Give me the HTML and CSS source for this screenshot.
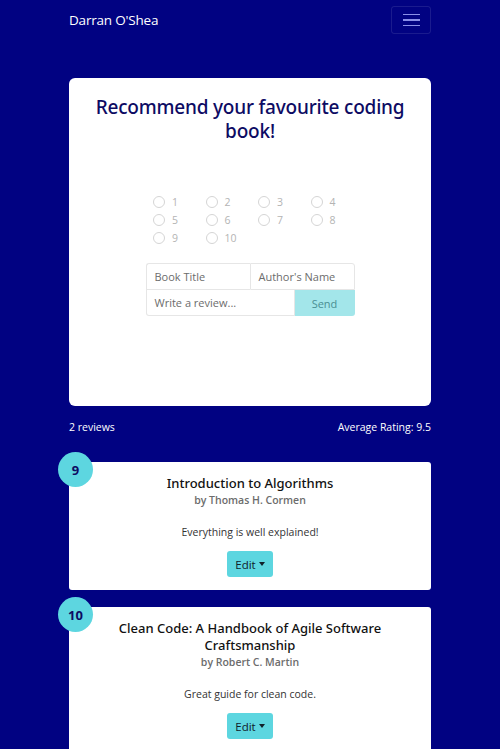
FILE: index.html
```html
<!DOCTYPE html>
<html>
<head>
<meta charset="utf-8">
<link rel="stylesheet" href="styles.css">
</head>
<body>
<nav class="navbar">
  <div class="brand">Darran O'Shea</div>
  <button class="toggler" aria-label="menu">
    <span class="bar"></span><span class="bar"></span><span class="bar"></span>
  </button>
</nav>
<main class="container">
  <section class="form-card">
    <h1 class="form-title">Recommend your favourite coding book!</h1>
    <div class="ratings">
      <label class="rating"><span class="radio"></span>1</label>
      <label class="rating"><span class="radio"></span>2</label>
      <label class="rating"><span class="radio"></span>3</label>
      <label class="rating"><span class="radio"></span>4</label>
      <label class="rating"><span class="radio"></span>5</label>
      <label class="rating"><span class="radio"></span>6</label>
      <label class="rating"><span class="radio"></span>7</label>
      <label class="rating"><span class="radio"></span>8</label>
      <label class="rating"><span class="radio"></span>9</label>
      <label class="rating"><span class="radio"></span>10</label>
    </div>
    <div class="input-group">
      <div class="row">
        <div class="field">Book Title</div>
        <div class="field">Author's Name</div>
      </div>
      <div class="row">
        <div class="field review-field">Write a review...</div>
        <div class="send">Send</div>
      </div>
    </div>
  </section>
  <div class="summary">
    <span>2 reviews</span>
    <span>Average Rating: 9.5</span>
  </div>
  <article class="review-card">
    <div class="badge">9</div>
    <h2 class="book-title">Introduction to Algorithms</h2>
    <div class="author">by Thomas H. Cormen</div>
    <p class="review-text">Everything is well explained!</p>
    <div class="actions"><button class="edit">Edit<span class="caret"></span></button></div>
  </article>
  <article class="review-card">
    <div class="badge">10</div>
    <h2 class="book-title">Clean Code: A Handbook of Agile Software Craftsmanship</h2>
    <div class="author">by Robert C. Martin</div>
    <p class="review-text">Great guide for clean code.</p>
    <div class="actions"><button class="edit">Edit<span class="caret"></span></button></div>
  </article>
</main>
</body>
</html>
```
FILE: styles.css
```css
html, body {
  margin: 0;
  padding: 0;
}
body {
  background: #010282;
  font-family: "Open Sans", "Noto Sans", sans-serif;
  color: #212529;
  height: 749px;
  overflow: hidden;
}
.navbar {
  display: flex;
  justify-content: space-between;
  align-items: center;
  padding: 6px 69px 0 69px;
  height: 28px;
}
.brand {
  color: #ffffff;
  font-size: 13.5px;
  letter-spacing: -0.2px;
}
.toggler {
  width: 40px;
  height: 28px;
  background: transparent;
  border: 1px solid rgba(255,255,255,0.1);
  border-radius: 3px;
  display: flex;
  flex-direction: column;
  justify-content: center;
  align-items: center;
  gap: 4px;
  padding: 0;
}
.toggler .bar {
  display: block;
  width: 17px;
  height: 1.5px;
  background: #8a8fe8;
}
.container {
  margin: 44px 69px 0 69px;
}
.form-card {
  background: #ffffff;
  border-radius: 6px;
  height: 328px;
  padding-top: 17px;
  box-sizing: border-box;
}
.form-title {
  margin: 0 auto;
  width: 320px;
  text-align: center;
  font-family: "Noto Sans", "Open Sans", sans-serif;
  font-weight: 500;
  font-size: 19px;
  line-height: 24px;
  letter-spacing: -0.2px;
  color: #0d0b63;
}
.ratings {
  margin: 52px auto 0 auto;
  width: 212px;
  display: grid;
  grid-template-columns: repeat(4, 52.5px);
  row-gap: 5px;
  transform: translateX(9px);
}
.rating {
  display: flex;
  align-items: center;
  gap: 7px;
  font-size: 10.5px;
  color: #b4b4b4;
  height: 13px;
}
.radio {
  width: 10px;
  height: 10px;
  border: 1px solid #d5d5d5;
  border-radius: 50%;
}
.input-group {
  margin: 19px auto 0 auto;
  width: 209px;
  font-size: 11px;
  color: #6c6c6c;
}
.row {
  display: flex;
}
.field {
  flex: 1;
  height: 27px;
  box-sizing: border-box;
  border: 1px solid #e6e6e6;
  padding: 0 8px;
  display: flex;
  align-items: center;
  background: #fff;
}
.row:first-child .field:first-child {
  border-top-left-radius: 3px;
  border-right: none;
}
.row:first-child .field:last-child {
  border-top-right-radius: 3px;
}
.row:last-child .field {
  border-top: none;
  height: 26px;
  border-bottom-left-radius: 3px;
}
.review-field {
  flex: 0 0 149px;
}
.send {
  flex: 1;
  height: 26px;
  background: #a3e6ea;
  color: #4a8f93;
  display: flex;
  align-items: center;
  justify-content: center;
  border-bottom-right-radius: 3px;
}
.summary {
  display: flex;
  justify-content: space-between;
  color: #ffffff;
  font-size: 10.5px;
  margin-top: 13px;
  height: 16px;
  align-items: center;
}
.review-card {
  position: relative;
  background: #ffffff;
  border-radius: 3px;
  margin-top: 27px;
  padding: 13px 16px 12px 16px;
  text-align: center;
  min-height: 128px;
  box-sizing: border-box;
}
.review-card + .review-card {
  margin-top: 17px;
}
.badge {
  position: absolute;
  left: -11px;
  top: -10px;
  width: 35px;
  height: 35px;
  border-radius: 50%;
  background: #5dd6e0;
  color: #0d0b63;
  font-weight: 700;
  font-size: 13px;
  display: flex;
  align-items: center;
  justify-content: center;
}
.book-title {
  margin: 0;
  font-family: "Noto Sans", "Open Sans", sans-serif;
  font-size: 13px;
  font-weight: 500;
  line-height: 17px;
  color: #111;
}
.author {
  font-size: 10.5px;
  font-weight: 600;
  color: #6c6c6c;
  margin-top: 1px;
  line-height: 15px;
}
.review-text {
  margin: 17px 0 0 0;
  font-size: 10.5px;
  line-height: 14px;
  color: #333;
}
.actions {
  margin-top: 12px;
  display: flex;
  justify-content: center;
}
.edit {
  background: #5dd6e0;
  border: none;
  border-radius: 3px;
  height: 26px;
  padding: 0 8px;
  font-family: inherit;
  font-size: 11.5px;
  color: #10202a;
  display: inline-flex;
  align-items: center;
  gap: 3px;
}
.caret {
  display: inline-block;
  width: 0;
  height: 0;
  border-left: 3.5px solid transparent;
  border-right: 3.5px solid transparent;
  border-top: 4px solid #10202a;
}
```
